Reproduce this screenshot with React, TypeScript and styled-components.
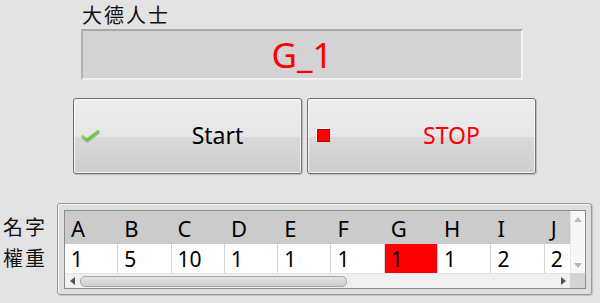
import React from 'react'
import styled, { createGlobalStyle } from 'styled-components'

const GlobalStyle = createGlobalStyle`
  html, body {
    margin: 0;
    padding: 0;
    background: #e3e3e3;
  }
  body {
    font-family: "Noto Sans", "Noto Sans CJK TC", sans-serif;
    color: #111;
  }
`

const names = ['A', 'B', 'C', 'D', 'E', 'F', 'G', 'H', 'I', 'J']
const weights = ['1', '5', '10', '1', '1', '1', '1', '1', '2', '2']
const activeIndex = 6

const Page = styled.div`
  width: 600px;
  height: 303px;
  overflow: hidden;
  display: flex;
  flex-direction: column;
`

const Top = styled.div`
  margin-left: 81px;
  display: flex;
  flex-direction: column;
`

const Title = styled.div`
  height: 29px;
  font-family: "Noto Sans CJK TC", sans-serif;
  font-size: 20px;
  letter-spacing: 2px;
  line-height: 30px;
  padding-left: 1px;
`

const Display = styled.div`
  width: 442px;
  height: 51px;
  box-sizing: border-box;
  background: #d3d3d3;
  border-top: 2px solid #a9a9a9;
  border-left: 2px solid #b4b4b4;
  border-bottom: 2px solid #f2f2f2;
  border-right: 2px solid #f2f2f2;
  display: flex;
  align-items: center;
  justify-content: center;
  color: #ff0000;
  font-size: 35px;
  padding-bottom: 1px;
`

const ButtonRow = styled.div`
  display: flex;
  gap: 5px;
  margin-top: 18px;
  padding-left: 73px;
`

const Button = styled.div<{ $danger?: boolean }>`
  width: 229px;
  height: 76px;
  box-sizing: border-box;
  border: 1px solid #707070;
  border-radius: 3px;
  background: linear-gradient(
    to bottom,
    #ededed 0%,
    #e6e6e6 52%,
    #d9d9d9 52%,
    #cdcdcd 100%
  );
  box-shadow: inset 0 0 0 1px rgba(255, 255, 255, 0.75), 1px 1px 1px rgba(0, 0, 0, 0.18);
  display: flex;
  align-items: center;
  color: ${p => (p.$danger ? '#ff0000' : '#000')};
  font-size: 23px;
`

const IconSlot = styled.div<{ $offset: number }>`
  width: 60px;
  box-sizing: border-box;
  padding-left: ${p => p.$offset}px;
  display: flex;
  align-items: center;
`

const ButtonLabel = styled.span`
  flex: 1;
  text-align: center;
  padding-bottom: 2px;
`

const StopSquare = styled.div`
  width: 13px;
  height: 13px;
  box-sizing: border-box;
  background: #ff0000;
  border: 1px solid #c00000;
  box-shadow: -1px -1px 0 #ffffff;
  margin-top: -2px;
`

const TableSection = styled.div`
  display: flex;
  margin-top: 29px;
`

const Labels = styled.div`
  width: 57px;
  padding-top: 7px;
  padding-left: 3px;
  box-sizing: border-box;
  display: flex;
  flex-direction: column;
  font-family: "Noto Sans CJK TC", sans-serif;
  font-size: 20px;
  letter-spacing: 2px;
`

const LabelRow = styled.div<{ $h: number }>`
  height: ${p => p.$h}px;
  display: flex;
  align-items: center;
`

const Frame = styled.div`
  width: 535px;
  height: 92px;
  box-sizing: border-box;
  border: 1px solid #9a9a9a;
  border-radius: 3px;
  background: #dedede;
  box-shadow: inset 1px 1px 0 #f8f8f8, 1px 1px 1px rgba(0, 0, 0, 0.15);
  padding: 6px 5px 5px 6px;
`

const Inner = styled.div`
  box-sizing: border-box;
  border: 1px solid #8a8a8a;
  display: grid;
  grid-template-columns: minmax(0, 1fr) 15px;
  grid-template-rows: 62px 15px;
  height: 79px;
`

const Grid = styled.div`
  min-width: 0;
  overflow: hidden;
  background: #fff;
`

const Row = styled.div<{ $header?: boolean }>`
  display: flex;
  height: ${p => (p.$header ? 33 : 29)}px;
  background: ${p => (p.$header ? '#cbcbcb' : '#fff')};
  width: 540px;
`

const Cell = styled.div<{ $header?: boolean; $active?: boolean }>`
  flex: 0 0 53.3px;
  box-sizing: border-box;
  padding-left: 6px;
  display: flex;
  align-items: center;
  font-size: ${p => (p.$header ? 22 : 21)}px;
  line-height: 24px;
  color: #000;
  border-right: 1px solid ${p => (p.$header ? 'transparent' : '#d6d6d6')};
  background: ${p => (p.$active ? '#ff0000' : 'transparent')};
`

const VScroll = styled.div`
  background: #f7f7f7;
  border-left: 1px solid #e6e6e6;
  display: flex;
  flex-direction: column;
  justify-content: space-between;
  align-items: center;
  padding: 6px 0 5px;
  box-sizing: border-box;
`

const HScroll = styled.div`
  background: #f0f0f0;
  border-top: 1px solid #e2e2e2;
  display: flex;
  align-items: center;
  padding: 0 4px 0 5px;
  box-sizing: border-box;
`

const Corner = styled.div`
  background: #d4d4d4;
`

const Arrow = styled.div<{ $dir: 'up' | 'down' | 'left' | 'right'; $color: string }>`
  width: 0;
  height: 0;
  border-style: solid;
  ${p =>
    p.$dir === 'up'
      ? `border-width: 0 4px 5px 4px; border-color: transparent transparent ${p.$color} transparent;`
      : p.$dir === 'down'
      ? `border-width: 5px 4px 0 4px; border-color: ${p.$color} transparent transparent transparent;`
      : p.$dir === 'left'
      ? `border-width: 4px 5px 4px 0; border-color: transparent ${p.$color} transparent transparent;`
      : `border-width: 4px 0 4px 5px; border-color: transparent transparent transparent ${p.$color};`}
`

const Thumb = styled.div`
  width: 265px;
  height: 9px;
  margin-left: 5px;
  border: 1px solid #a9a9a9;
  border-radius: 5px;
  background: linear-gradient(to bottom, #e2e2e2, #cfcfcf);
`

const Spacer = styled.div`
  flex: 1;
`

const CheckIcon = () => (
  <svg width="19" height="13" viewBox="0 0 19 13">
    <defs>
      <linearGradient id="chk" x1="0" y1="0" x2="1" y2="1">
        <stop offset="0" stopColor="#b5ec7a" />
        <stop offset="1" stopColor="#3fae2a" />
      </linearGradient>
    </defs>
    <path d="M2 8.5 L6.5 12 L18 3" fill="none" stroke="#9a9a9a" strokeWidth="2" strokeLinecap="round" strokeLinejoin="round" opacity="0.6" />
    <path d="M1.5 6.5 L6 10 L17 1.5" fill="none" stroke="url(#chk)" strokeWidth="3" strokeLinecap="round" strokeLinejoin="round" />
  </svg>
)

const App: React.FC = () => {
  return (
    <>
      <GlobalStyle />
      <Page>
        <Top>
          <Title>大德人士</Title>
          <Display>G_1</Display>
        </Top>
        <ButtonRow>
          <Button>
            <IconSlot $offset={7}>
              <CheckIcon />
            </IconSlot>
            <ButtonLabel>Start</ButtonLabel>
          </Button>
          <Button $danger>
            <IconSlot $offset={9}>
              <StopSquare />
            </IconSlot>
            <ButtonLabel>STOP</ButtonLabel>
          </Button>
        </ButtonRow>
        <TableSection>
          <Labels>
            <LabelRow $h={33}>名字</LabelRow>
            <LabelRow $h={29}>權重</LabelRow>
          </Labels>
          <Frame>
            <Inner>
              <Grid>
                <Row $header>
                  {names.map(n => (
                    <Cell key={n} $header>
                      {n}
                    </Cell>
                  ))}
                </Row>
                <Row>
                  {weights.map((w, i) => (
                    <Cell key={i} $active={i === activeIndex}>
                      {w}
                    </Cell>
                  ))}
                </Row>
              </Grid>
              <VScroll>
                <Arrow $dir="up" $color="#b8b8b8" />
                <Arrow $dir="down" $color="#b8b8b8" />
              </VScroll>
              <HScroll>
                <Arrow $dir="left" $color="#555" />
                <Thumb />
                <Spacer />
                <Arrow $dir="right" $color="#555" />
              </HScroll>
              <Corner />
            </Inner>
          </Frame>
        </TableSection>
      </Page>
    </>
  )
}

export default App
